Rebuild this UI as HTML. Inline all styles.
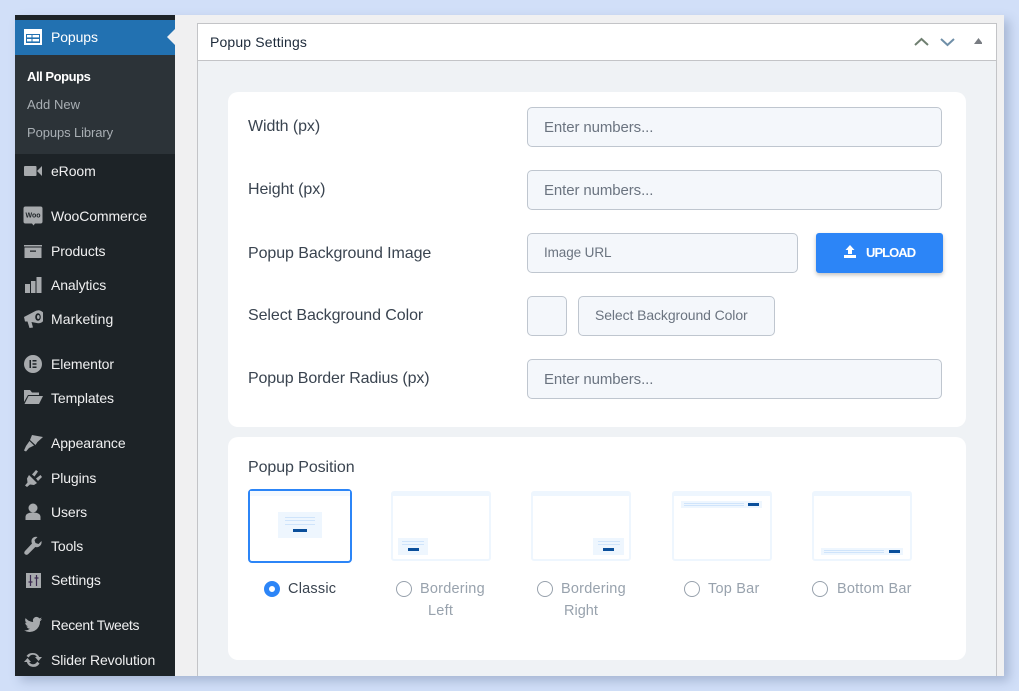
<!DOCTYPE html>
<html><head><meta charset="utf-8"><style>
html,body{margin:0;padding:0;width:1019px;height:691px;overflow:hidden;background:#d1dff8;font-family:"Liberation Sans",sans-serif}
div,span,svg{position:absolute;box-sizing:border-box}
.t{white-space:nowrap;line-height:20px}
.m{left:51px;color:#f0f0f1;font-size:14px;letter-spacing:-.1px}
.ic{left:23px;width:20px;height:20px;fill:#a7aaad}
.l{left:248px;color:#3a4450;font-size:16px;letter-spacing:-.08px}
.in{background:#f4f7fb;border:1px solid #bfc6cf;border-radius:5px;height:40px;color:#6b7480;font-size:15px;letter-spacing:-.1px;line-height:39px;padding-left:16px;white-space:nowrap}
.in.n{line-height:40px}
.th{top:491px;width:100px;height:70px;background:#fff;border:2px solid #eef6fe;border-top-width:5px;border-radius:3px}
.o{width:16px;height:16px;border:1.5px solid #98a2ad;border-radius:50%;top:581px}
.r{color:#98a2ad;font-size:14.5px;letter-spacing:.22px}
.p{background:#eef6fe}.b{background:#0a4f9b}.ln{background:#cfe4fb;height:1px}
</style></head><body>
<div style="left:0;top:0;width:1019px;height:691px;background:#d1dff8"></div>
<div style="left:15px;top:15px;width:989px;height:661px;background:#f0f0f1;box-shadow:5px 5px 10px rgba(70,90,130,.3)"></div>
<div style="left:15px;top:15px;width:160px;height:661px;background:#1d2327"></div>
<div style="left:15px;top:20px;width:160px;height:35px;background:#2271b1"></div>
<div style="left:15px;top:55px;width:160px;height:99px;background:#2c3338"></div>
<svg style="left:167px;top:29px;width:8px;height:16px"><path d="M8 0L0 8l8 8z" fill="#f0f0f1"/></svg>

<svg class="ic" style="top:28px;fill:none" viewBox="0 0 20 20"><rect x="1" y="1" width="18" height="16" fill="#fff"/><rect x="3" y="6" width="14" height="9" fill="#2271b1"/><rect x="4" y="7" width="4.500" height="2.400" fill="#fff"/><rect x="9.500" y="7" width="6.500" height="2.400" fill="#fff"/><rect x="4" y="11" width="4.500" height="2.400" fill="#fff"/><rect x="9.500" y="11" width="6.500" height="2.400" fill="#fff"/></svg>
<div class="t m" style="top:27px;color:#fff">Popups</div>
<div class="t" style="left:27px;top:67px;color:#fff;font-size:13px;font-weight:bold;letter-spacing:-.45px">All Popups</div>
<div class="t" style="left:27px;top:95px;color:#a9afb4;font-size:13px;letter-spacing:.05px">Add New</div>
<div class="t" style="left:27px;top:123px;color:#a9afb4;font-size:13px;letter-spacing:-.1px">Popups Library</div>

<svg class="ic" style="top:161px" viewBox="0 0 20 20"><rect x="1" y="5" width="12.500" height="10" rx="1"/><path d="M14 10L19 5V15z"/></svg>
<div class="t m" style="top:161px">eRoom</div>
<svg class="ic" style="top:206px" viewBox="0 0 20 20"><path d="M2.500 0.500h15a2 2 0 0 1 2 2v13a2 2 0 0 1-2 2H12l-1.500 2-1.500-2H2.500a2 2 0 0 1-2-2v-13a2 2 0 0 1 2-2z"/><text x="10" y="11.500" font-size="7" font-weight="bold" text-anchor="middle" fill="#1d2327" font-family="Liberation Sans">Woo</text></svg>
<div class="t m" style="top:206px">WooCommerce</div>
<svg class="ic" style="top:241px" viewBox="0 0 20 20"><rect x="1" y="4" width="18" height="1.500"/><path d="M1.500 6.500h17V17h-17zM7 9.500v1.200h6V9.500z" fill-rule="evenodd"/></svg>
<div class="t m" style="top:241px">Products</div>
<svg class="ic" style="top:275px" viewBox="0 0 20 20"><rect x="2" y="9" width="5" height="9"/><rect x="8" y="6" width="4.500" height="12"/><rect x="13.500" y="2" width="5" height="16"/></svg>
<div class="t m" style="top:275px">Analytics</div>
<svg class="ic" style="top:309px" viewBox="0 0 20 20"><path d="M1 8L12 2.200A6.500 6.500 0 1 1 15 14.300L8.500 13l1.500 5.500-3.500.5L4.500 12.500H2z"/><ellipse cx="15" cy="8" rx="2.800" ry="3.800" fill="#1d2327"/><ellipse cx="15.300" cy="8" rx="1.300" ry="2"/></svg>
<div class="t m" style="top:309px;letter-spacing:.1px">Marketing</div>
<svg class="ic" style="top:354px" viewBox="0 0 20 20"><path fill-rule="evenodd" d="M10 1a9 9 0 1 0 0 18 9 9 0 0 0 0-18zM6.500 6H8v8H6.500zM9.500 6h4v1.500h-4zM9.500 9.200h4v1.500h-4zM9.500 12.500h4V14h-4z"/></svg>
<div class="t m" style="top:354px">Elementor</div>
<svg class="ic" style="top:388px" viewBox="0 0 20 20"><path d="M1 2h6l2 2.500h7V7H5L1 14z"/><path d="M5.500 8H20L16 16H1.500z"/></svg>
<div class="t m" style="top:388px">Templates</div>
<svg class="ic" style="top:433px" viewBox="0 0 20 20"><path d="M9 2l11 2-5.500 5L12.500 12 7 7z"/><path d="M6.500 8l4.500 4.500-5 2.500-3 3.500L1 17.500 3 13z"/></svg>
<div class="t m" style="top:433px">Appearance</div>
<svg class="ic" style="top:468px" viewBox="0 0 20 20"><path d="M6 7l8 8-3 2-4-.5-3 2.500-2-1.500 2.500-3-.5-4z"/><path d="M9 6.500l4-4.500 2 1.500-3.500 5zM13 10.500l4.500-3.500 1.500 2-4 4z"/></svg>
<div class="t m" style="top:468px">Plugins</div>
<svg class="ic" style="top:502px" viewBox="0 0 20 20"><circle cx="10" cy="6" r="4.500"/><path d="M2.500 18v-3c0-3 3-4.500 7.500-4.500s7.500 1.500 7.500 4.500v3z"/></svg>
<div class="t m" style="top:502px">Users</div>
<svg class="ic" style="top:536px" viewBox="0 0 20 20"><path d="M18.500 5l-3 3-3-1-1-3 3-3c-3-1-6 1-6 4 0 1 0 1.500.5 2.500L2 15c-1 1-1 2.500 0 3.300s2.300.7 3.300-.3l7-7c3.500 1 7-2 6.200-6z"/></svg>
<div class="t m" style="top:536px">Tools</div>
<svg class="ic" style="top:570px" viewBox="0 0 20 20"><rect x="3" y="3" width="15" height="15"/><path d="M7.500 5v11M13.500 5v11M5.500 12h4M11.500 8h4" stroke="#3b2a50" stroke-width="1.200"/></svg>
<div class="t m" style="top:570px">Settings</div>
<svg class="ic" style="top:615px" viewBox="0 0 20 20"><path d="M19 4c-.7.300-1.300.5-2 .5.700-.5 1.300-1.100 1.600-2-.7.400-1.400.7-2.200.9A3.600 3.600 0 0 0 10.200 7C7.200 6.800 4.500 5.400 2.700 3.100c-1 1.700-.5 3.800 1.100 4.900-.6 0-1.100-.2-1.600-.5 0 1.800 1.200 3.300 2.900 3.700-.5.100-1.100.2-1.600.1.500 1.500 1.800 2.500 3.400 2.500A7.300 7.300 0 0 1 1 15.300 10.300 10.300 0 0 0 17 6.200c.8-.6 1.500-1.300 2-2.200z"/></svg>
<div class="t m" style="top:615px;letter-spacing:-.32px">Recent Tweets</div>
<svg class="ic" style="top:650px" viewBox="0 0 20 20"><path d="M10 3a7 7 0 0 1 6.200 4H19l-3.500 4-3.500-4h1.800a4.500 4.500 0 0 0-8 .5L3.500 6A7 7 0 0 1 10 3zM1 12l3.500-4L8 12H6.200a4.500 4.500 0 0 0 8-.5l2.300 2A7 7 0 0 1 3.800 12z"/></svg>
<div class="t m" style="top:650px">Slider Revolution</div>

<div style="left:197px;top:23px;width:800px;height:653px;background:#eff2f5;border:1px solid #c3c4c7;border-bottom:0"></div>
<div style="left:197px;top:23px;width:800px;height:38px;background:#fff;border:1px solid #c3c4c7"></div>
<div class="t" style="left:210px;top:32px;color:#1d2a3a;font-size:14px;letter-spacing:.15px">Popup Settings</div>
<svg style="left:912px;top:34px;width:70px;height:16px;fill:none;stroke-width:2"><path d="M3 11l6.500-6 6.500 6" stroke="#6f7f70"/><path d="M29 5l6.500 6 6.500-6" stroke="#6f8fa8"/><path d="M62 10l4.500-6 4.500 6z" fill="#787c82" stroke="none"/></svg>

<div style="left:228px;top:92px;width:738px;height:335px;background:#fff;border-radius:10px"></div>
<div class="t l" style="top:117px">Width (px)</div>
<div class="in n" style="left:527px;top:107px;width:415px">Enter numbers...</div>
<div class="t l" style="top:180px">Height (px)</div>
<div class="in n" style="left:527px;top:170px;width:415px">Enter numbers...</div>
<div class="t l" style="top:244px">Popup Background Image</div>
<div class="in" style="left:527px;top:233px;width:271px;font-size:13.500px;line-height:38px">Image URL</div>
<div style="left:816px;top:233px;width:127px;height:40px;background:#2c85f7;border-radius:3px;box-shadow:0 2px 4px rgba(0,0,0,.25)"></div>
<svg style="left:843px;top:245px;width:14px;height:14px;fill:#fff"><path d="M7 0L11.500 5H9v4H5V5H2.500zM1 10h12v3H1z"/></svg>
<div class="t" style="left:866px;top:243px;color:#fff;font-size:13px;font-weight:bold;letter-spacing:-.95px">UPLOAD</div>
<div class="t l" style="top:306px">Select Background Color</div>
<div class="in" style="left:527px;top:296px;width:40px"></div>
<div class="in" style="left:578px;top:296px;width:197px;font-size:14px;line-height:37px">Select Background Color</div>
<div class="t l" style="top:369px;letter-spacing:-.15px">Popup Border Radius (px)</div>
<div class="in n" style="left:527px;top:359px;width:415px">Enter numbers...</div>

<div style="left:228px;top:437px;width:738px;height:223px;background:#fff;border-radius:10px"></div>
<div class="t l" style="top:458px">Popup Position</div>

<div class="th" style="left:248px;top:489px;width:104px;height:74px;border:2px solid #2c85f7;border-radius:4px"></div>
<div class="p" style="left:250px;top:491px;width:100px;height:5px;background:#f4f9ff"></div>
<div class="p" style="left:278px;top:512px;width:44px;height:26px"></div>
<div class="ln" style="left:285px;top:517px;width:30px"></div><div class="ln" style="left:285px;top:520px;width:30px"></div><div class="ln" style="left:285px;top:524px;width:30px"></div>
<div class="b" style="left:293px;top:529px;width:14px;height:3px"></div>

<div class="th" style="left:391px"></div>
<div class="p" style="left:398px;top:538px;width:30px;height:17px"></div>
<div class="ln" style="left:402px;top:541px;width:22px"></div><div class="ln" style="left:402px;top:544px;width:22px"></div>
<div class="b" style="left:408px;top:548px;width:11px;height:3px"></div>

<div class="th" style="left:531px"></div>
<div class="p" style="left:593px;top:538px;width:31px;height:17px"></div>
<div class="ln" style="left:598px;top:541px;width:22px"></div><div class="ln" style="left:598px;top:544px;width:22px"></div>
<div class="b" style="left:603px;top:548px;width:11px;height:3px"></div>

<div class="th" style="left:672px"></div>
<div class="p" style="left:681px;top:501px;width:81px;height:7px"></div>
<div class="ln" style="left:684px;top:503px;width:60px"></div><div class="ln" style="left:684px;top:505px;width:60px"></div>
<div class="b" style="left:748px;top:503px;width:11px;height:3px"></div>

<div class="th" style="left:812px"></div>
<div class="p" style="left:821px;top:548px;width:82px;height:7px"></div>
<div class="ln" style="left:824px;top:550px;width:60px"></div><div class="ln" style="left:824px;top:552px;width:60px"></div>
<div class="b" style="left:889px;top:550px;width:11px;height:3px"></div>

<div style="left:264px;top:581px;width:16px;height:16px;border:5px solid #2c85f7;border-radius:50%;background:#fff"></div>
<div class="t r" style="left:288px;top:579px;color:#3a4450">Classic</div>
<div class="o" style="left:396px"></div>
<div class="t r" style="left:420px;top:579px">Bordering</div>
<div class="t r" style="left:428px;top:601px">Left</div>
<div class="o" style="left:537px"></div>
<div class="t r" style="left:561px;top:579px">Bordering</div>
<div class="t r" style="left:564px;top:601px;letter-spacing:0">Right</div>
<div class="o" style="left:684px"></div>
<div class="t r" style="left:708px;top:579px">Top Bar</div>
<div class="o" style="left:812px"></div>
<div class="t r" style="left:837px;top:579px">Bottom Bar</div>
</body></html>
